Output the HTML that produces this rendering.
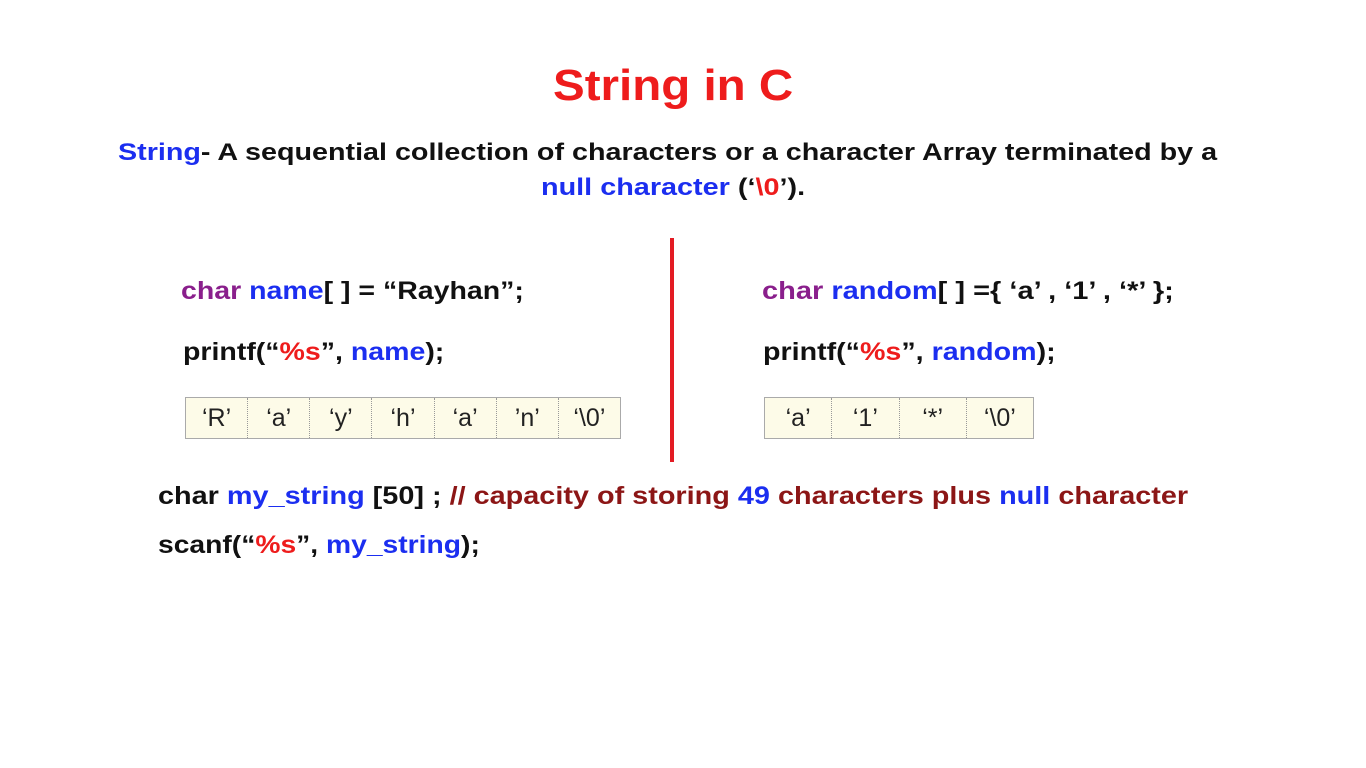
<!DOCTYPE html>
<html><head><meta charset="utf-8"><style>
body{margin:0;width:1366px;height:768px;background:#fff;position:relative;overflow:hidden;font-family:"Liberation Sans",Arial,sans-serif;font-weight:bold;color:#111}
.a{position:absolute;white-space:nowrap;line-height:1;transform-origin:0 0}
.r{color:#ee1c1c}.b{color:#1b2ef0}.p{color:#8a1f8c}.d{color:#8c1616}
.box{position:absolute;display:flex;border:1px solid #aaa;background:#fdfbe8;height:40px}
.box div{border-right:1px dotted #999;font-weight:normal;font-size:25px;display:flex;align-items:center;justify-content:center;color:#222}
.box div:last-child{border-right:none}
</style></head><body>
<div class="a r" style="left:553px;top:64px;font-size:44px;transform:scaleX(1.08)">String in C</div>
<div class="a" style="left:118px;top:141px;font-size:24px;transform:scaleX(1.196)"><span class="b">String</span>- A sequential collection of characters or a character Array terminated by a</div>
<div class="a" style="left:541px;top:176px;font-size:24px;transform:scaleX(1.2)"><span class="b">null character</span> (‘<span class="r">\0</span>’).</div>
<div style="position:absolute;left:670px;top:238px;width:4px;height:224px;background:#e31b23"></div>
<div class="a" style="left:181px;top:279px;font-size:25px;transform:scaleX(1.14)"><span class="p">char</span> <span class="b">name</span>[ ] = “Rayhan”;</div>
<div class="a" style="left:183px;top:340px;font-size:25px;transform:scaleX(1.14)">printf(“<span class="r">%s</span>”, <span class="b">name</span>);</div>
<div class="box" style="left:185px;top:397px;width:434px">
<div style="width:62px">‘R’</div><div style="width:62px">‘a’</div><div style="width:62px">‘y’</div><div style="width:62px">‘h’</div><div style="width:62px">‘a’</div><div style="width:62px">’n’</div><div style="width:62px">‘\0’</div></div>
<div class="a" style="left:762px;top:279px;font-size:25px;transform:scaleX(1.16)"><span class="p">char</span> <span class="b">random</span>[ ] ={ ‘a’ , ‘1’ , ‘*’ };</div>
<div class="a" style="left:763px;top:340px;font-size:25px;transform:scaleX(1.145)">printf(“<span class="r">%s</span>”, <span class="b">random</span>);</div>
<div class="box" style="left:764px;top:397px;width:268px">
<div style="width:67px">‘a’</div><div style="width:67px">‘1’</div><div style="width:67px">‘*’</div><div style="width:67px">‘\0’</div></div>
<div class="a" style="left:158px;top:484px;font-size:25px;transform:scaleX(1.153)">char <span class="b">my_string</span> [50] ; <span class="d">// capacity of storing </span><span class="b">49</span><span class="d"> characters plus </span><span class="b">null</span><span class="d"> character</span></div>
<div class="a" style="left:158px;top:533px;font-size:25px;transform:scaleX(1.13)">scanf(“<span class="r">%s</span>”, <span class="b">my_string</span>);</div>
</body></html>
